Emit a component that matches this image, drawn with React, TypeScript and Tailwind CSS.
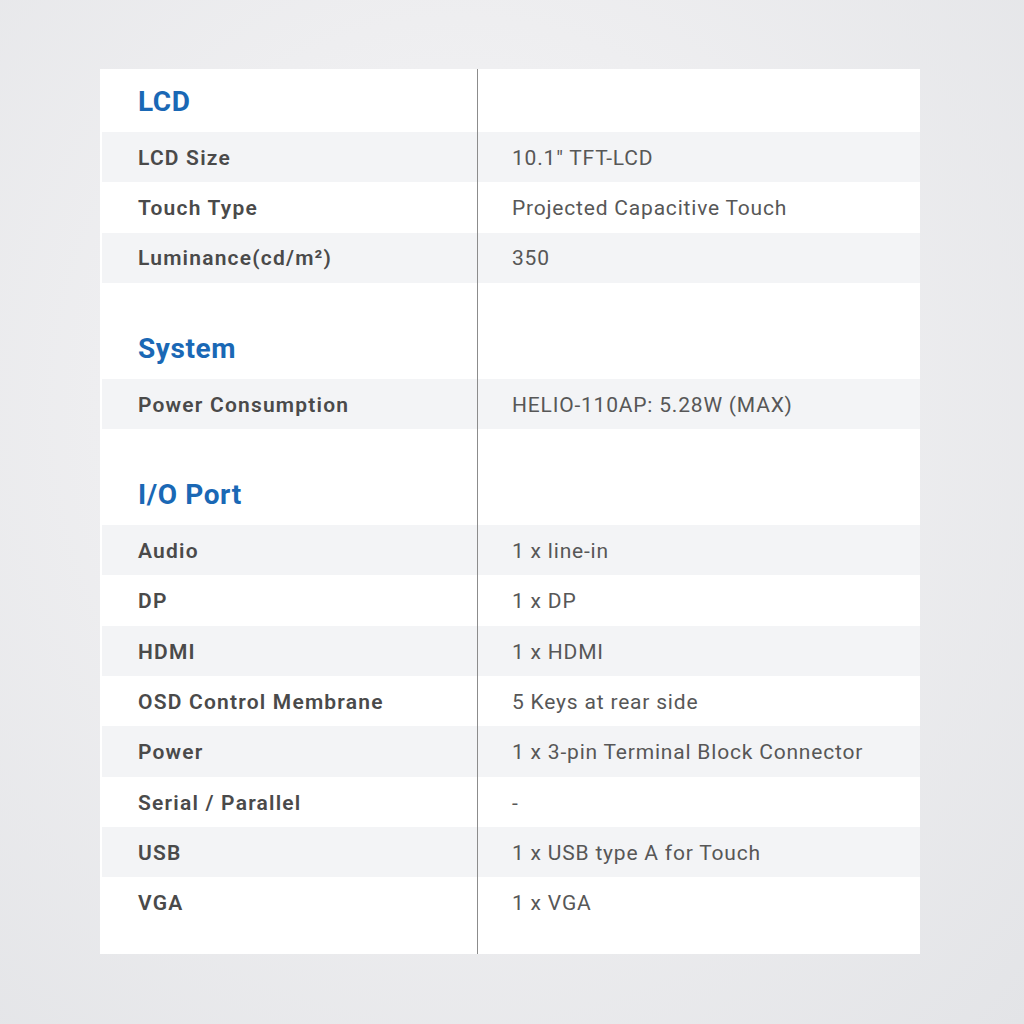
import React from "react";

type Row = { label: string; value: string };
type Section = { title: string; first?: boolean; rows: Row[] };

const sections: Section[] = [
  {
    title: "LCD",
    first: true,
    rows: [
      { label: "LCD Size", value: '10.1" TFT-LCD' },
      { label: "Touch Type", value: "Projected Capacitive Touch" },
      { label: "Luminance(cd/m²)", value: "350" },
    ],
  },
  {
    title: "System",
    rows: [{ label: "Power Consumption", value: "HELIO-110AP: 5.28W (MAX)" }],
  },
  {
    title: "I/O Port",
    rows: [
      { label: "Audio", value: "1 x line-in" },
      { label: "DP", value: "1 x DP" },
      { label: "HDMI", value: "1 x HDMI" },
      { label: "OSD Control Membrane", value: "5 Keys at rear side" },
      { label: "Power", value: "1 x 3-pin Terminal Block Connector" },
      { label: "Serial / Parallel", value: "-" },
      { label: "USB", value: "1 x USB type A for Touch" },
      { label: "VGA", value: "1 x VGA" },
    ],
  },
];

export default function App() {
  return (
    <div
      className="w-[1024px] h-[1024px] bg-[radial-gradient(ellipse_at_45%_40%,#f6f6f8_0%,#eeeef0_45%,#e3e4e7_100%)] pt-[69px] pl-[100px]"
      style={{ fontFamily: "Roboto, 'Liberation Sans', sans-serif" }}
    >
      <div className="w-[820px] bg-white pl-[2px] flex flex-col">
        {sections.map((s) => (
          <div key={s.title} className="flex flex-col">
            <div className={`flex ${s.first ? "h-[63px]" : "h-[96px]"}`}>
              <div className="w-[375px] flex items-end pl-[36px] pb-[16px]">
                <span className="text-[28px] leading-none font-bold text-[#1a68b5] tracking-[0.6px]">
                  {s.title}
                </span>
              </div>
              <div className="flex-1 border-l border-[#8c8c8c]" />
            </div>
            {s.rows.map((r, i) => (
              <div
                key={r.label}
                className={`flex h-[50.3px] ${i % 2 === 0 ? "bg-[#f3f4f6]" : "bg-white"}`}
              >
                <div className="w-[375px] flex items-center pl-[36px] pt-[3px] text-[21px] font-semibold text-[#4a4a4a] tracking-[1.2px]">
                  {r.label}
                </div>
                <div className="flex-1 flex items-center border-l border-[#8c8c8c] pl-[34px] pt-[3px] text-[21px] text-[#575757] tracking-[0.8px]">
                  {r.value}
                </div>
              </div>
            ))}
          </div>
        ))}
        <div className="flex h-[26px]">
          <div className="w-[375px]" />
          <div className="flex-1 border-l border-[#8c8c8c]" />
        </div>
      </div>
    </div>
  );
}
